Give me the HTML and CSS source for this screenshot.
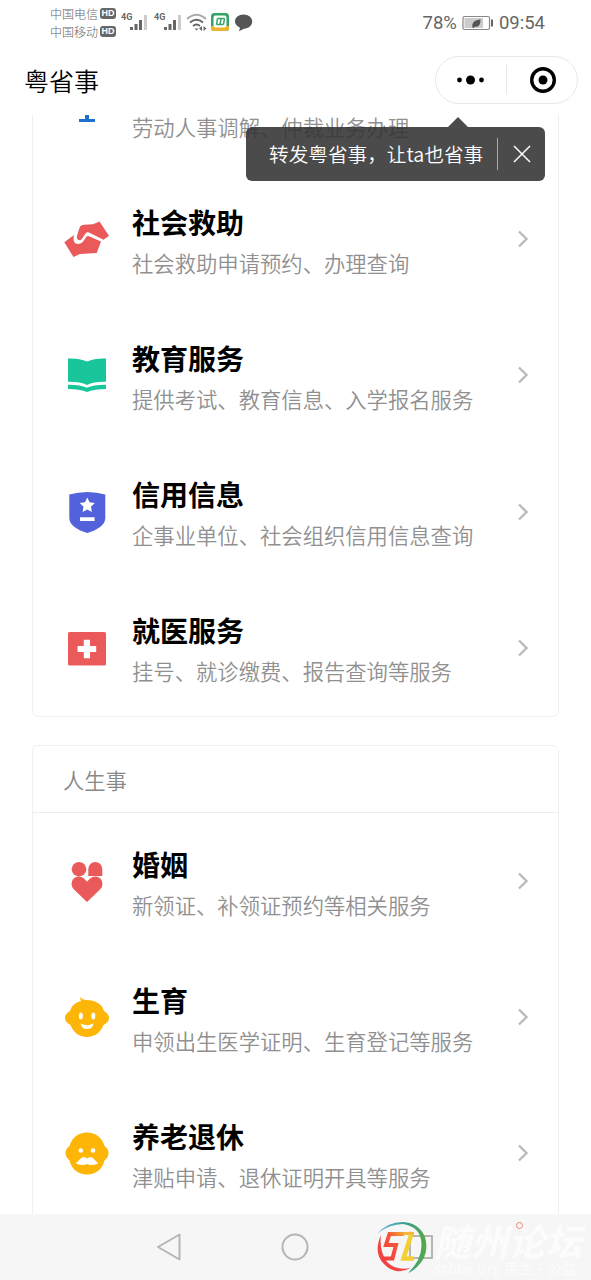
FILE: index.html
```html
<!DOCTYPE html>
<html lang="zh-CN">
<head>
<meta charset="utf-8">
<title>粤省事</title>
<link rel="stylesheet" href="styles.css">
</head>
<body>
<div class="phone">
  <header class="status">
    <div class="carriers">
      <div class="carrier">中国电信<span class="hd">HD</span></div>
      <div class="carrier">中国移动<span class="hd">HD</span></div>
    </div>
    <svg class="status-icons" width="136" height="26" viewBox="0 0 136 26">
      <g fill="#666">
        <text class="net" x="1" y="11">4G</text>
        <path d="M10 18h3v3h-3zM14.500 15h3v6h-3zM19 11h3v10h-3z"/><path fill="#ccc" d="M24 6h3v15h-3z"/>
        <text class="net" x="34" y="11">4G</text>
        <path d="M44 18h3v3h-3zM48.500 15h3v6h-3zM53 11h3v10h-3z"/><path fill="#ccc" d="M58 6h3v15h-3z"/>
      </g>
      <g fill="none" stroke="#666" stroke-width="1.900">
        <path stroke="#aaa" d="M67 10q9.500-8.500 19 0"/><path d="M70 13.500q6.500-5.500 13 0M73 17q3.500-3 7 0"/>
      </g>
      <path fill="#666" d="M74.500 19.500h4l-2 2zM82 17v5l-3-2.500zM83.500 17v5l3-2.500z"/>
      <rect x="91" y="4" width="18" height="18" rx="3.500" fill="#35a266"/>
      <path d="M91 17h18v1.500a3.500 3.500 0 0 1-3.500 3.500h-11a3.500 3.500 0 0 1-3.500-3.500z" fill="#f0b12c"/>
      <rect x="93.500" y="6.500" width="13" height="12" rx="2" fill="#fff"/>
      <path d="M96.500 15.500l1-6M100 15.500l1-6M103.500 15.500l1-6M97.500 9.500h7M96.500 15.500h7" fill="none" stroke="#35a266" stroke-width="1.500"/>
      <path fill="#555" d="M123.500 5.500c5 0 8.700 3 8.700 7s-3.700 7-8.200 7.200l-5 2.600 1-3.600c-3-1.300-5-3.500-5-6.200 0-4 3.700-7 8.500-7z"/>
    </svg>
    <div class="status-right">
      <span>78%</span>
      <svg width="32" height="16" viewBox="0 0 32 16">
        <rect x="1" y="1.500" width="26.500" height="13" rx="1.500" fill="#fff" stroke="#888" stroke-width="1.200"/>
        <rect x="2.500" y="3" width="18.500" height="10" fill="#ccc"/>
        <path d="M29 4.500h2v7h-2z" fill="#666"/>
        <path d="M10.500 12.500c-1-5 2-7.500 8-8 0 5.500-2 8-6 7.200l-1 1.500z" fill="#555"/>
      </svg>
      <span>09:54</span>
    </div>
  </header>

  <div class="navbar">
    <h1 class="app-title">粤省事</h1>
    <div class="capsule">
      <svg width="141" height="46" viewBox="0 0 141 46">
        <circle cx="23.500" cy="23" r="2.400"/><circle cx="34.500" cy="23" r="4.500"/><circle cx="45.500" cy="23" r="2.400"/>
        <path d="M70.500 8v29" stroke="#e8e8e8"/>
        <circle cx="107" cy="23" r="11.300" fill="none" stroke="#000" stroke-width="3.400"/><circle cx="107" cy="23" r="4.500"/>
      </svg>
    </div>
    <div class="tip">
      <span class="tip-text">转发粤省事，让ta也省事</span>
      <span class="tip-line"></span>
      <svg width="18" height="18" viewBox="0 0 18 18"><path d="M1 1l16 16M17 1L1 17" stroke="#fff" stroke-width="1.500"/></svg>
    </div>
  </div>

  <main class="content">
    <section class="card card-scrolled">
      <div class="row">
        <svg class="icon" viewBox="0 0 48 48"><path fill="#1f6fd0" d="M22 30h4v10h6v3H16v-3h6z"/></svg>
        <div class="text"><h2>劳动仲裁</h2><p>劳动人事调解、仲裁业务办理</p></div>
        <svg class="chevron" viewBox="0 0 12 18"><path d="M2 1.500L9.500 9 2 16.500"/></svg>
      </div>
      <div class="row">
        <svg class="icon" viewBox="0 0 48 48"><g fill="#eb5a5b"><path d="M17 11.500q1.500-1.800 4-1.800l9-.5 6.500-2.700L46 20.700l-5.500 4L26 17.500q-2-.8-3.500 1l-3.700 5.500q-1.800 2-3.800.8-1.800-1.500-1-4.300z"/><path d="M1.300 27.300L11 20q-2 9 4.500 9 3 0 5-3l3-4.500q1-1 2.500-.3L38 26.500 33.700 38 17 39l-6.500 3z"/></g></svg>
        <div class="text"><h2>社会救助</h2><p>社会救助申请预约、办理查询</p></div>
        <svg class="chevron" viewBox="0 0 12 18"><path d="M2 1.500L9.500 9 2 16.500"/></svg>
      </div>
      <div class="row">
        <svg class="icon" viewBox="0 0 48 48"><path fill="#19c69b" d="M5 7.500q11-.5 19 3 8-3.500 19-3v23.300q-12-.3-19 3.200-7-3.500-19-3.200zM5 33.700q12-.2 19 3 7-3.200 19-3V38q-12 0-19 3-7-3-19-3z"/></svg>
        <div class="text"><h2>教育服务</h2><p>提供考试、教育信息、入学报名服务</p></div>
        <svg class="chevron" viewBox="0 0 12 18"><path d="M2 1.500L9.500 9 2 16.500"/></svg>
      </div>
      <div class="row">
        <svg class="icon" viewBox="0 0 48 48"><path fill="#5361da" d="M6.300 6.500Q15 4 24.300 4t18 2.500V30c0 7-8 12-18 15-10-3-18-8-18-15z"/><path fill="#fff" d="M24.300 9.500l2.300 4.800 5.200.7-3.800 3.700.9 5.300-4.600-2.500-4.700 2.500.9-5.300-3.800-3.700 5.300-.7zM17 29.300h14.600v3.700H17z"/></svg>
        <div class="text"><h2>信用信息</h2><p>企事业单位、社会组织信用信息查询</p></div>
        <svg class="chevron" viewBox="0 0 12 18"><path d="M2 1.500L9.500 9 2 16.500"/></svg>
      </div>
      <div class="row">
        <svg class="icon" viewBox="0 0 48 48"><rect x="5" y="8" width="38" height="33.500" rx="1.500" fill="#eb5a5b"/><path fill="#fff" d="M20.800 15.800h6.200V22h6.200v6H27v6.200h-6.200V28h-6.200v-6h6.200z"/></svg>
        <div class="text"><h2>就医服务</h2><p>挂号、就诊缴费、报告查询等服务</p></div>
        <svg class="chevron" viewBox="0 0 12 18"><path d="M2 1.500L9.500 9 2 16.500"/></svg>
      </div>
    </section>

    <section class="card">
      <h3 class="card-head">人生事</h3>
      <div class="row">
        <svg class="icon" viewBox="0 0 48 48"><g fill="#eb5a5b"><circle cx="16" cy="12.200" r="7.300"/><path d="M25.300 19V12a7 7 0 0 1 14 0v7zM24 24.700l3-3.200q3-2.500 7-1.700 5.500 1.700 5.500 7.200 0 3-2.500 5.500L24 45 11 32.500Q8.500 30 8.500 27q0-5.500 5.500-7.200 4-.8 7 1.700z"/></g></svg>
        <div class="text"><h2>婚姻</h2><p>新领证、补领证预约等相关服务</p></div>
        <svg class="chevron" viewBox="0 0 12 18"><path d="M2 1.500L9.500 9 2 16.500"/></svg>
      </div>
      <div class="row">
        <svg class="icon" viewBox="0 0 48 48"><path fill="#fdb507" d="M17.500 4q1.500 3 6 3c9 0 15.500 4 17.500 11q5 3 5 7t-5.500 7C38 39 32 44 24 44S10 39 7.500 32Q2 29 2 25t5-7c1.500-5 5-8.500 11-10q-1-1.500-.5-4z"/><g fill="#fff"><ellipse cx="17.800" cy="23" rx="2" ry="3.500"/><ellipse cx="30.300" cy="23" rx="2" ry="3.500"/><path d="M17.500 30.500q2 1 3 1 3.500 1.500 7 0l3-1Q29.500 36 24 36t-6.500-5.500z"/></g></svg>
        <div class="text"><h2>生育</h2><p>申领出生医学证明、生育登记等服务</p></div>
        <svg class="chevron" viewBox="0 0 12 18"><path d="M2 1.500L9.500 9 2 16.500"/></svg>
      </div>
      <div class="row">
        <svg class="icon" viewBox="0 0 48 48"><path fill="#fdb507" d="M24 3.500c8.500 0 15 5 17.500 13.500Q45.500 20 45.500 24t-4 7.500C39.500 40 33 45.500 24 45.500S8.500 40 6.500 31.500Q2.500 28 2.500 24t4-7C9 8.500 15.500 3.500 24 3.500z"/><g fill="#fff"><circle cx="17.800" cy="21.500" r="2.300"/><circle cx="30" cy="21.500" r="2.300"/><path d="M24 29.500q4-3.500 7.500 1 1.500 2 3.800 3.700-6.800 3.300-11.300.8-4.500 2.500-11.300-.8Q15 32.500 16.500 30.500q3.500-4.500 7.500-1z"/></g></svg>
        <div class="text"><h2>养老退休</h2><p>津贴申请、退休证明开具等服务</p></div>
        <svg class="chevron" viewBox="0 0 12 18"><path d="M2 1.500L9.500 9 2 16.500"/></svg>
      </div>
    </section>
  </main>

  <footer class="sysnav">
    <svg width="26" height="30" viewBox="0 0 26 30"><path d="M23.500 2.500v25L2 15z"/></svg>
    <svg width="28" height="28" viewBox="0 0 28 28"><circle cx="14" cy="14" r="12.500"/></svg>
    <svg width="26" height="26" viewBox="0 0 26 26"><rect x="2" y="2" width="22" height="22"/></svg>
    <div class="watermark">
      <svg class="wm-logo" width="52" height="54" viewBox="0 0 52 54">
        <defs>
          <linearGradient id="sweep" x1="0" y1="0" x2="1" y2="0"><stop offset="0" stop-color="#6fb4e0"/><stop offset=".6" stop-color="#35a08a"/><stop offset="1" stop-color="#5aa845"/></linearGradient>
          <linearGradient id="ess" x1="0" y1="1" x2="1" y2="0"><stop offset="0" stop-color="#f43c3c"/><stop offset=".65" stop-color="#f2583a"/><stop offset="1" stop-color="#f6a532"/></linearGradient>
        </defs>
        <path fill="url(#sweep)" d="M0 13Q10 1 26 1q16 1 22 15 5 18-8 30-4 4-9 6 13-12 13.500-27Q45 6 26 3 12 3 0 13z"/>
        <path fill="#f04444" d="M4 14q-8 18 3 29 11 12 27 4-15 3-24-6Q2 30 4 14z"/>
        <path fill="none" stroke="url(#ess)" stroke-width="4" d="M27 13H12.500L9 24h10l-3.500 13.500H5"/>
        <path fill="none" stroke="#f3cf35" stroke-width="4.500" d="M35 11l-8.500 26.500H37"/>
        <path fill="none" stroke="#f4b93a" stroke-width="3" d="M27 12.500h10"/>
      </svg>
      <div class="wm-text"><b>随州论坛</b><span>szbbs.org 民生·公益</span></div>
      <svg class="wm-ring" width="9" height="9" viewBox="0 0 9 9"><circle cx="4.500" cy="4.500" r="3"/></svg>
    </div>
  </footer>
</div>
</body>
</html>
```
FILE: styles.css
```css
* { box-sizing: border-box; }
body, h1, h2, h3, p { margin: 0; }
body {
  background: #fff;
  font-family: "Noto Sans CJK SC", "Noto Sans", sans-serif;
}
svg { display: block; flex: none; }
.phone {
  display: flex;
  flex-direction: column;
  width: 591px;
  height: 1280px;
  overflow: hidden;
}
.status {
  display: flex;
  height: 45px;
  padding: 4px 46px 0 50px;
  color: #666;
}
.carrier {
  display: flex;
  align-items: center;
  gap: 2px;
  height: 18px;
  font-size: 12px;
  font-weight: 300;
}
.hd {
  width: 16px;
  height: 11px;
  border-radius: 3px;
  background: #666;
  color: #fff;
  font: 700 9px/11px "Liberation Sans", sans-serif;
  text-align: center;
}
.status-icons { margin: 5px 0 0 4px; }
.net { font: 700 9px "Roboto", sans-serif; }
.status-right {
  display: flex;
  align-items: center;
  gap: 5px;
  height: 37px;
  margin-left: auto;
  font-family: Roboto, sans-serif;
  font-size: 18.500px;
}
.navbar {
  position: relative;
  display: flex;
  flex: none;
  align-items: center;
  justify-content: space-between;
  height: 70px;
  padding: 0 13px 0 24px;
}
.app-title {
  font-size: 25px;
  font-weight: 350;
  line-height: 38px;
}
.capsule {
  width: 143px;
  height: 48px;
  border: 1px solid #e8e8e8;
  border-radius: 24px;
}
.tip {
  position: absolute;
  z-index: 1;
  top: 82px;
  left: 246px;
  display: flex;
  align-items: center;
  width: 299px;
  height: 54px;
  padding-left: 23px;
  border-radius: 6px;
  background: rgba(50, 50, 50, .88);
  color: #fff;
}
.tip::before {
  content: "";
  position: absolute;
  top: -10px;
  left: 202px;
  border: 10px solid transparent;
  border-top: 0;
  border-bottom-color: rgba(50, 50, 50, .88);
}
.tip-text {
  padding-bottom: 2px;
  font-size: 19.650px;
  font-weight: 350;
  white-space: nowrap;
}
.tip-line {
  width: 1px;
  height: 32px;
  margin: 0 15px 0 14px;
  background: #aaa;
}
.content {
  flex: 1;
  min-height: 0;
  padding: 0 32px;
  overflow: hidden;
}
.card {
  border: 1px solid #f0f0f0;
  border-radius: 6px;
  margin-bottom: 28px;
}
.card-scrolled { margin-top: -81px; }
.card-head {
  height: 67px;
  padding-left: 30px;
  border-bottom: 1px solid #ededed;
  color: #888;
  font-size: 21.300px;
  font-weight: 350;
  line-height: 67px;
}
.row {
  display: flex;
  align-items: center;
  height: 136.200px;
  padding: 0 29px 0 30px;
}
.icon { width: 48px; height: 48px; }
.text { flex: 1; margin-left: 21px; padding-top: 2px; white-space: nowrap; }
.text h2 {
  font-size: 28px;
  font-weight: 700;
  line-height: 41px;
}
.text p {
  color: #909090;
  font-size: 21.330px;
  font-weight: 350;
  line-height: 32px;
  margin-top: 4px;
}
.chevron {
  width: 12px;
  height: 18px;
  fill: none;
  stroke: #bbb;
  stroke-width: 2.400;
}
.sysnav {
  position: relative;
  display: flex;
  flex: none;
  align-items: center;
  justify-content: space-between;
  height: 66px;
  padding: 0 157px 0 156px;
  background: #f6f6f6;
}
.sysnav > svg {
  fill: none;
  stroke: #b5b5b5;
  stroke-width: 2;
  stroke-linejoin: round;
}
.watermark {
  position: absolute;
  top: 7px;
  left: 377px;
  display: flex;
  gap: 5px;
}
.wm-text {
  display: flex;
  flex-direction: column;
  color: #fcfcfc;
  white-space: nowrap;
}
.wm-text b {
  font-size: 37px;
  font-style: italic;
  font-weight: 700;
  line-height: 38px;
}
.wm-text span {
  font-size: 14px;
  letter-spacing: .5px;
  line-height: 18px;
}
.wm-ring {
  position: absolute;
  top: 0;
  left: 138px;
  fill: none;
  stroke: #e58a7c;
}
```
